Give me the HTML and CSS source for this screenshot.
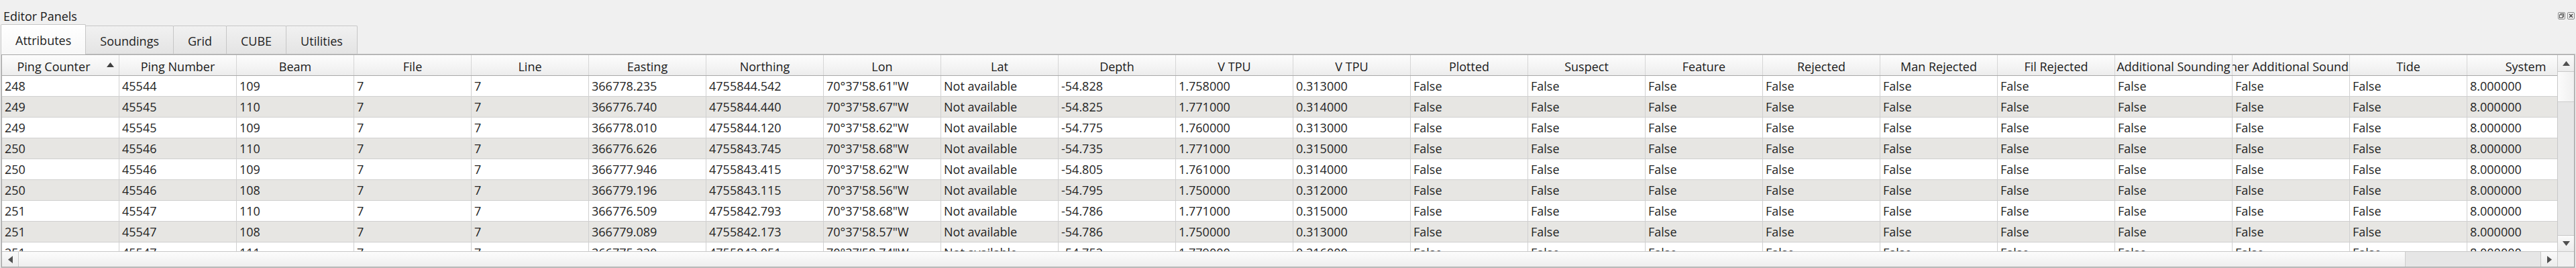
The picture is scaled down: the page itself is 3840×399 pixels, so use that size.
FILE: index.html
```html
<!DOCTYPE html>
<html>
<head>
<meta charset="utf-8">
<title>Editor Panels</title>
<link rel="stylesheet" href="styles.css">
</head>
<body>
<div class="dock">
  <div class="titlebar">
    <span class="title">Editor Panels</span>
    <div class="title-btns">
      <svg class="tbtn" width="11" height="11" viewBox="0 0 11 11"><rect x="0.5" y="0.5" width="10" height="10" rx="1.5" fill="none" stroke="#8a8a8a"/><rect x="4" y="2.5" width="4.5" height="4.5" fill="none" stroke="#505050"/><rect x="2.5" y="4" width="4.5" height="4.5" fill="#f0f0f0" stroke="#505050"/></svg>
      <svg class="tbtn" width="11" height="11" viewBox="0 0 11 11"><rect x="0.5" y="0.5" width="10" height="10" rx="1.5" fill="none" stroke="#8a8a8a"/><path d="M3 3 L8 8 M8 3 L3 8" stroke="#404040" stroke-width="1.4"/></svg>
    </div>
  </div>
  <div class="tabbar">
    <div class="tab active">Attributes</div>
    <div class="tab">Soundings</div>
    <div class="tab">Grid</div>
    <div class="tab">CUBE</div>
    <div class="tab">Utilities</div>
  </div>
  <div class="pane">
    <div class="tableview">
      <div class="tv-main">
        <div class="grid">
          <div class="hdr">
            <span class="sorted">Ping Counter<svg class="sort-ind" width="11" height="7" viewBox="0 0 11 7"><polygon points="0,7 11,7 5.5,0" fill="#404040"/></svg></span>
            <span>Ping Number</span><span>Beam</span><span>File</span><span>Line</span><span>Easting</span><span>Northing</span><span>Lon</span><span>Lat</span><span>Depth</span><span>V TPU</span><span>V TPU</span><span>Plotted</span><span>Suspect</span><span>Feature</span><span>Rejected</span><span>Man Rejected</span><span>Fil Rejected</span><span>Additional Sounding</span><span>Other Additional Sounding</span><span>Tide</span><span>System</span>
          </div>
          <div class="row">
            <span>248</span><span>45544</span><span>109</span><span>7</span><span>7</span><span>366778.235</span><span>4755844.542</span><span>70°37'58.61"W</span><span>Not available</span><span>-54.828</span><span>1.758000</span><span>0.313000</span><span>False</span><span>False</span><span>False</span><span>False</span><span>False</span><span>False</span><span>False</span><span>False</span><span>False</span><span>8.000000</span>
          </div>
          <div class="row alt">
            <span>249</span><span>45545</span><span>110</span><span>7</span><span>7</span><span>366776.740</span><span>4755844.440</span><span>70°37'58.67"W</span><span>Not available</span><span>-54.825</span><span>1.771000</span><span>0.314000</span><span>False</span><span>False</span><span>False</span><span>False</span><span>False</span><span>False</span><span>False</span><span>False</span><span>False</span><span>8.000000</span>
          </div>
          <div class="row">
            <span>249</span><span>45545</span><span>109</span><span>7</span><span>7</span><span>366778.010</span><span>4755844.120</span><span>70°37'58.62"W</span><span>Not available</span><span>-54.775</span><span>1.760000</span><span>0.313000</span><span>False</span><span>False</span><span>False</span><span>False</span><span>False</span><span>False</span><span>False</span><span>False</span><span>False</span><span>8.000000</span>
          </div>
          <div class="row alt">
            <span>250</span><span>45546</span><span>110</span><span>7</span><span>7</span><span>366776.626</span><span>4755843.745</span><span>70°37'58.68"W</span><span>Not available</span><span>-54.735</span><span>1.771000</span><span>0.315000</span><span>False</span><span>False</span><span>False</span><span>False</span><span>False</span><span>False</span><span>False</span><span>False</span><span>False</span><span>8.000000</span>
          </div>
          <div class="row">
            <span>250</span><span>45546</span><span>109</span><span>7</span><span>7</span><span>366777.946</span><span>4755843.415</span><span>70°37'58.62"W</span><span>Not available</span><span>-54.805</span><span>1.761000</span><span>0.314000</span><span>False</span><span>False</span><span>False</span><span>False</span><span>False</span><span>False</span><span>False</span><span>False</span><span>False</span><span>8.000000</span>
          </div>
          <div class="row alt">
            <span>250</span><span>45546</span><span>108</span><span>7</span><span>7</span><span>366779.196</span><span>4755843.115</span><span>70°37'58.56"W</span><span>Not available</span><span>-54.795</span><span>1.750000</span><span>0.312000</span><span>False</span><span>False</span><span>False</span><span>False</span><span>False</span><span>False</span><span>False</span><span>False</span><span>False</span><span>8.000000</span>
          </div>
          <div class="row">
            <span>251</span><span>45547</span><span>110</span><span>7</span><span>7</span><span>366776.509</span><span>4755842.793</span><span>70°37'58.68"W</span><span>Not available</span><span>-54.786</span><span>1.771000</span><span>0.315000</span><span>False</span><span>False</span><span>False</span><span>False</span><span>False</span><span>False</span><span>False</span><span>False</span><span>False</span><span>8.000000</span>
          </div>
          <div class="row alt">
            <span>251</span><span>45547</span><span>108</span><span>7</span><span>7</span><span>366779.089</span><span>4755842.173</span><span>70°37'58.57"W</span><span>Not available</span><span>-54.786</span><span>1.750000</span><span>0.313000</span><span>False</span><span>False</span><span>False</span><span>False</span><span>False</span><span>False</span><span>False</span><span>False</span><span>False</span><span>8.000000</span>
          </div>
          <div class="row">
            <span>251</span><span>45547</span><span>111</span><span>7</span><span>7</span><span>366775.320</span><span>4755842.051</span><span>70°37'58.74"W</span><span>Not available</span><span>-54.752</span><span>1.779000</span><span>0.316000</span><span>False</span><span>False</span><span>False</span><span>False</span><span>False</span><span>False</span><span>False</span><span>False</span><span>False</span><span>8.000000</span>
          </div>
        </div>
        <div class="vscroll">
          <div class="sbtn vbtn-up"><svg width="11" height="7" viewBox="0 0 11 7"><polygon points="0,7 11,7 5.5,0" fill="#505050"/></svg></div>
          <div class="vthumb"></div>
          <div class="vtrough"></div>
          <div class="sbtn vbtn-down"><svg width="11" height="7" viewBox="0 0 11 7"><polygon points="0,0 11,0 5.5,7" fill="#505050"/></svg></div>
        </div>
      </div>
      <div class="hbar-row">
        <div class="hscroll">
          <div class="sbtn hbtn-left"><svg width="7" height="11" viewBox="0 0 7 11"><polygon points="7,0 7,11 0,5.5" fill="#505050"/></svg></div>
          <div class="hthumb"></div>
          <div class="htrough"></div>
          <div class="sbtn hbtn-right"><svg width="7" height="11" viewBox="0 0 7 11"><polygon points="0,0 0,11 7,5.5" fill="#505050"/></svg></div>
        </div>
        <div class="corner"></div>
      </div>
    </div>
  </div>
</div>
</body>
</html>
```
FILE: styles.css
```css
* { box-sizing: border-box; margin: 0; padding: 0; }
html, body { background: #f0f0f0; }
body {
  width: 3840px;
  height: 399px;
  overflow: hidden;
  font-family: "Open Sans", "Noto Sans", sans-serif;
  font-size: 18px;
  color: #1e1e1e;
}
.dock { display: flex; flex-direction: column; height: 399px; }

.titlebar {
  height: 36px;
  display: flex;
  justify-content: space-between;
  align-items: flex-start;
  padding: 12px 2px 0 5px;
}
.title { line-height: 24px; color: #1a1a1a; }
.title-btns { display: flex; gap: 3px; padding-top: 6px; }
.tbtn { display: block; }

.tabbar {
  height: 44px;
  display: flex;
  align-items: flex-end;
  padding-left: 1px;
}
.tab {
  height: 42px;
  padding: 2px 21px 0 21px;
  display: flex;
  align-items: center;
  border: 1px solid #c6c6c6;
  border-bottom: none;
  border-radius: 2px 2px 0 0;
  background: linear-gradient(#f1f1f1, #e4e4e4);
  color: #1e1e1e;
  margin-left: -1px;
}
.tab.active {
  height: 45px;
  margin-bottom: -1px;
  margin-left: 0;
  background: linear-gradient(#ffffff, #f7f7f7);
  position: relative;
  z-index: 1;
}

.pane {
  flex: 1;
  margin: 0 1px;
  border: 1px solid #c6c6c6;
  background: #f7f7f7;
  display: flex;
  flex-direction: column;
}
.tableview {
  flex: 1;
  border: 1px solid #a8a8a8;
  background: #ffffff;
  display: flex;
  flex-direction: column;
}
.tv-main { display: flex; height: 292px; }
.grid { width: 3809px; overflow: hidden; background: #ffffff; }

.hdr, .row {
  display: grid;
  grid-template-columns: repeat(22, 175px);
  width: 3850px;
  height: 31px;
}
.hdr {
  background: linear-gradient(#fdfdfd, #ededed);
  border-bottom: 1px solid #a9a9a9;
}
.hdr > span {
  display: flex;
  align-items: center;
  justify-content: center;
  overflow: hidden;
  white-space: nowrap;
  border-right: 1px solid #d6d6d6;
  padding-top: 3px;
  color: #1a1a1a;
}
.hdr > span.sorted { position: relative; padding-right: 20px; }
.sort-ind { position: absolute; right: 7px; top: 11px; }

.row { border-bottom: 1px solid #d0d0d0; background: #ffffff; }
.row.alt { background: #e7e6e3; }
.row > span {
  display: flex;
  align-items: center;
  padding-left: 4px;
  overflow: hidden;
  white-space: nowrap;
  border-right: 1px solid #d0d0d0;
  color: #242424;
}

.vscroll {
  width: 25px;
  display: flex;
  flex-direction: column;
  border-left: 1px solid #c8c8c8;
  background: #e6e6e6;
}
.sbtn {
  display: flex;
  align-items: center;
  justify-content: center;
  background: linear-gradient(#fafafa, #ececec);
}
.vbtn-up { height: 25px; border-bottom: 1px solid #c8c8c8; }
.vthumb { height: 45px; background: linear-gradient(90deg, #fbfbfb, #f0f0f0); border-bottom: 1px solid #cdcdcd; }
.vtrough { flex: 1; background: #e6e6e6; }
.vbtn-down { height: 24px; border-top: 1px solid #c8c8c8; }

.hbar-row { display: flex; height: 23px; border-top: 1px solid #c8c8c8; }
.hscroll { width: 3809px; display: flex; background: #e6e6e6; }
.hbtn-left { width: 25px; border-right: 1px solid #c8c8c8; }
.hthumb { width: 3558px; background: linear-gradient(#fcfcfc, #eeeeee); border-right: 1px solid #cdcdcd; }
.htrough { flex: 1; background: #e6e6e6; }
.hbtn-right { width: 25px; border-left: 1px solid #c8c8c8; }
.corner { flex: 1; background: #f0f0f0; border-left: 1px solid #c8c8c8; }
```
